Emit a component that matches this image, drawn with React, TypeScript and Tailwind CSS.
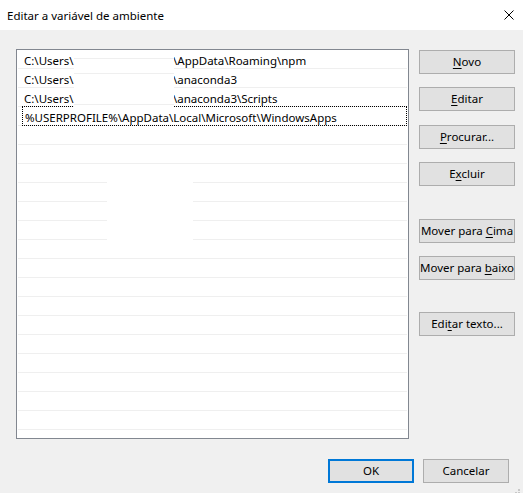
import React from 'react';

const rows = [
  { a: 'C:\\Users\\', b: '\\AppData\\Roaming\\npm' },
  { a: 'C:\\Users\\', b: '\\anaconda3' },
  { a: 'C:\\Users\\', b: '\\anaconda3\\Scripts' },
];

function Btn({ children, cls = '' }: { children: React.ReactNode; cls?: string }) {
  return (
    <div
      className={`w-[96px] h-[24px] bg-[#e1e1e1] border border-[#adadad] flex items-center justify-center whitespace-nowrap ${cls}`}
    >
      {children}
    </div>
  );
}

function U({ children }: { children: React.ReactNode }) {
  return <span className="underline underline-offset-[2px]">{children}</span>;
}

export default function App() {
  const empty = Array.from({ length: 16 });
  return (
    <div className="w-[523px] h-[493px] bg-[#f0f0f0] relative overflow-hidden text-[11.5px] text-black font-['Noto_Sans',sans-serif] leading-none">
      <div className="h-[30px] bg-white flex items-center justify-between pl-[7px] pr-[9px]">
        <span className="pt-px">Editar a variável de ambiente</span>
        <svg width="10" height="10" viewBox="0 0 10 10" className="mt-[-1px]">
          <path d="M0.5 0.5 L9.5 9.5 M9.5 0.5 L0.5 9.5" stroke="#000" strokeWidth="1" fill="none" />
        </svg>
      </div>

      <div className="flex pl-[16px] pt-[19px]">
        <div className="w-[393px] h-[390px] border border-[#828790] bg-white px-px relative overflow-hidden">
          {rows.map((r, i) => (
            <div key={i} className="h-[19px] border-b border-[#efefef] flex items-center pl-[6px] pt-[3px]">
              <span className="w-[149px]">{r.a}</span>
              <span>{r.b}</span>
            </div>
          ))}
          <div className="h-[19px] border-b border-[#efefef] flex items-center pl-[7px] pt-[3px] relative">
            <span>%USERPROFILE%\AppData\Local\Microsoft\WindowsApps</span>
            <span className="absolute left-[4px] right-0 top-[-1px] bottom-[-1px] border border-dotted border-black" />
          </div>
          {empty.map((_, i) => (
            <div key={i} className="h-[19px] border-b border-[#efefef]" />
          ))}

          {/* blanked-out user name */}
          <div className="absolute left-[57px] top-px w-[100px] h-[57px] bg-white">
            <div className="mt-[7px] h-px bg-[#efefef]" />
            <div className="mt-[14px] h-px bg-[#efefef]" />
            <div className="mt-[30px] h-px bg-[#efefef]" />
          </div>
          <div className="absolute left-[90px] top-[125px] w-[86px] h-[76px] bg-white" />
        </div>

        <div className="ml-[10px] pt-px flex flex-col">
          <Btn><span><U>N</U>ovo</span></Btn>
          <Btn cls="mt-[13px]"><span><U>E</U>ditar</span></Btn>
          <Btn cls="mt-[14px]"><span><U>P</U>rocurar...</span></Btn>
          <Btn cls="mt-[13px]"><span>E<U>x</U>cluir</span></Btn>
          <Btn cls="mt-[33px]"><span>Mover para <U>C</U>ima</span></Btn>
          <Btn cls="mt-[13px]"><span>Mover para <U>b</U>aixo</span></Btn>
          <Btn cls="mt-[32px]"><span>Edi<U>t</U>ar texto...</span></Btn>
        </div>
      </div>

      <div className="flex justify-end gap-[9px] pr-[14px] mt-[20px]">
        <div className="w-[86px] h-[24px] bg-[#e1e1e1] border-2 border-[#0078d7] flex items-center justify-center">OK</div>
        <div className="w-[86px] h-[24px] bg-[#e1e1e1] border border-[#adadad] flex items-center justify-center">Cancelar</div>
      </div>

      <div className="absolute left-[518px] top-[489px] w-[2px] h-[2px] bg-[#c8c8c8]" />
      <div className="absolute left-[515px] top-[492px] w-[2px] h-[2px] bg-[#c8c8c8]" />
      <div className="absolute left-[518px] top-[492px] w-[2px] h-[2px] bg-[#c8c8c8]" />
    </div>
  );
}
